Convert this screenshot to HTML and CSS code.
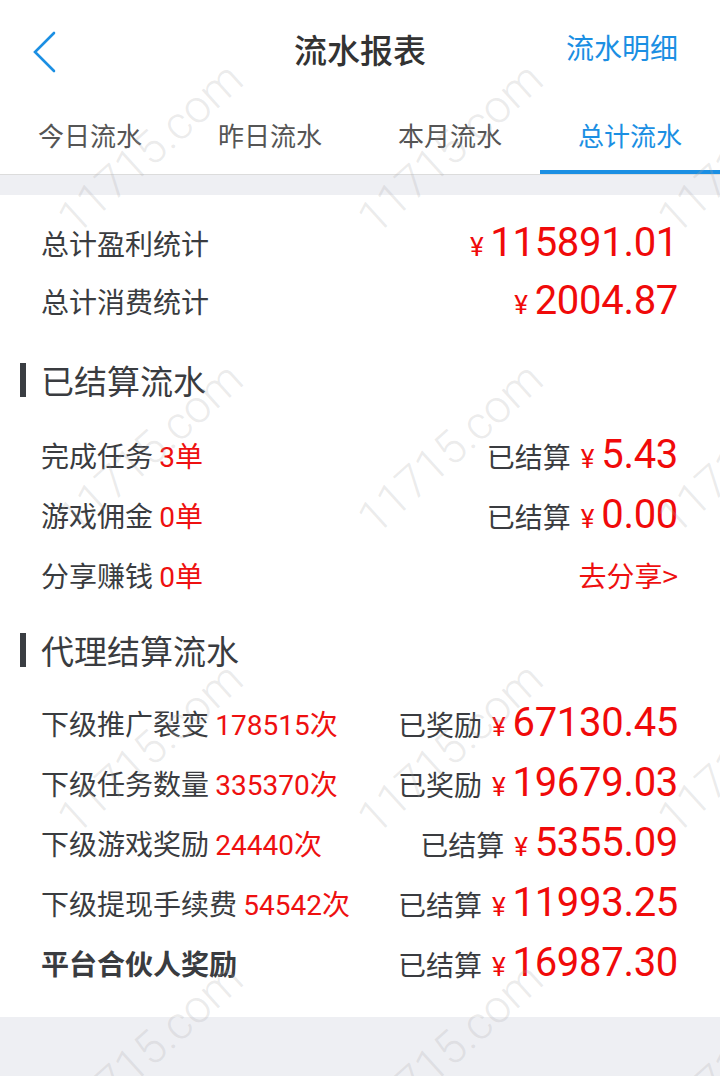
FILE: index.html
```html
<!DOCTYPE html>
<html lang="zh-CN">
<head>
<meta charset="utf-8">
<title>流水报表</title>
<link rel="stylesheet" href="styles.css">
</head>
<body>
<div class="page">
  <header class="topbar">
    <span class="back">
      <svg width="26" height="44" viewBox="0 0 26 44"><path d="M22 3 L3 22 L22 41" fill="none" stroke="#1b8fe3" stroke-width="2.6" stroke-linecap="round" stroke-linejoin="miter"/></svg>
    </span>
    <h1 class="title">流水报表</h1>
    <span class="detail">流水明细</span>
  </header>
  <nav class="tabs">
    <span class="tab">今日流水</span>
    <span class="tab">昨日流水</span>
    <span class="tab">本月流水</span>
    <span class="tab active">总计流水</span>
  </nav>
  <main class="content">
    <div class="row sum">
      <span class="label">总计盈利统计</span>
      <span class="money"><i class="yen">¥</i>115891.01</span>
    </div>
    <div class="row sum">
      <span class="label">总计消费统计</span>
      <span class="money"><i class="yen">¥</i>2004.87</span>
    </div>

    <h2 class="sec first">已结算流水</h2>
    <div class="row">
      <span class="label">完成任务 <em class="cnt">3单</em></span>
      <span class="right">已结算<span class="money"><i class="yen">¥</i>5.43</span></span>
    </div>
    <div class="row">
      <span class="label">游戏佣金 <em class="cnt">0单</em></span>
      <span class="right">已结算<span class="money"><i class="yen">¥</i>0.00</span></span>
    </div>
    <div class="row">
      <span class="label">分享赚钱 <em class="cnt">0单</em></span>
      <span class="share">去分享&gt;</span>
    </div>

    <h2 class="sec second">代理结算流水</h2>
    <div class="row">
      <span class="label">下级推广裂变 <em class="cnt">178515次</em></span>
      <span class="right">已奖励<span class="money"><i class="yen">¥</i>67130.45</span></span>
    </div>
    <div class="row">
      <span class="label">下级任务数量 <em class="cnt">335370次</em></span>
      <span class="right">已奖励<span class="money"><i class="yen">¥</i>19679.03</span></span>
    </div>
    <div class="row">
      <span class="label">下级游戏奖励 <em class="cnt">24440次</em></span>
      <span class="right">已结算<span class="money"><i class="yen">¥</i>5355.09</span></span>
    </div>
    <div class="row">
      <span class="label">下级提现手续费 <em class="cnt">54542次</em></span>
      <span class="right">已结算<span class="money"><i class="yen">¥</i>11993.25</span></span>
    </div>
    <div class="row">
      <span class="label bold">平台合伙人奖励</span>
      <span class="right">已结算<span class="money"><i class="yen">¥</i>16987.30</span></span>
    </div>
  </main>
</div>
<div class="watermark-clip" aria-hidden="true">
  <div class="watermark">
    <span>11715.com</span><span>11715.com</span><span>11715.com</span>
    <span>11715.com</span><span>11715.com</span><span>11715.com</span>
    <span>11715.com</span><span>11715.com</span><span>11715.com</span>
    <span>11715.com</span><span>11715.com</span><span>11715.com</span>
  </div>
</div>
</body>
</html>
```

FILE: styles.css
```css
* { box-sizing: border-box; margin: 0; padding: 0; }
html, body {
  width: 720px;
  height: 1076px;
  background: #eeeff3;
  overflow: hidden;
}
body {
  font-family: "Noto Sans CJK SC", "Noto Sans", sans-serif;
  color: #3a3c40;
  position: relative;
}
.page { width: 720px; }

.topbar {
  height: 96px;
  background: #fff;
  display: flex;
  align-items: center;
  justify-content: center;
  position: relative;
}
.back {
  position: absolute;
  left: 32px;
  top: 30px;
  display: flex;
}
.title {
  font-size: 33px;
  font-weight: 500;
  color: #333;
  line-height: 1;
  margin-top: 2px;
}
.detail {
  position: absolute;
  right: 42px;
  top: 30px;
  font-size: 28px;
  line-height: 34px;
  color: #1b8fe3;
}

.tabs {
  height: 79px;
  background: #fff;
  display: grid;
  grid-template-columns: repeat(4, 1fr);
  border-bottom: 1px solid #dcdcdc;
}
.tab {
  display: flex;
  align-items: center;
  justify-content: center;
  font-size: 26px;
  color: #555;
  padding-top: 2px;
  border-bottom: 4px solid transparent;
}
.tab.active {
  color: #1b8fe3;
  border-bottom-color: #1b8fe3;
}

.content {
  margin-top: 20px;
  background: #fff;
  padding: 19px 42px 24px 41px;
}
.row {
  height: 60px;
  display: flex;
  align-items: center;
  justify-content: space-between;
}
.row.sum { height: 58px; }
.label {
  font-size: 28px;
  color: #3a3c40;
  white-space: nowrap;
}
.label.bold { font-weight: 700; }
.cnt {
  font-style: normal;
  color: #ee1010;
  font-family: Roboto, "Noto Sans CJK SC", sans-serif;
}
.right {
  font-size: 28px;
  color: #3a3c40;
  display: flex;
  align-items: baseline;
  white-space: nowrap;
}
.money {
  font-family: Roboto, "Noto Sans", sans-serif;
  font-size: 40px;
  color: #f00a0a;
  line-height: 1;
  display: inline-flex;
  align-items: baseline;
  letter-spacing: -0.3px;
}
.yen {
  font-style: normal;
  font-size: 26px;
  margin: 0 7px 0 10px;
}
.share {
  font-size: 28px;
  color: #ee1010;
}

.sec {
  height: 60px;
  display: flex;
  align-items: center;
  font-size: 33px;
  font-weight: 400;
  color: #3a3c40;
  margin-left: -21px;
  position: relative;
  padding-left: 21px;
}
.sec::before {
  content: "";
  position: absolute;
  left: 0;
  top: 13px;
  width: 6px;
  height: 34px;
  background: #3a3d42;
}
.sec.first { margin-top: 20px; margin-bottom: 15px; }
.sec.second { margin-top: 15px; margin-bottom: 13px; }

.watermark-clip {
  position: absolute;
  left: 0;
  top: 0;
  width: 720px;
  height: 1076px;
  overflow: hidden;
  pointer-events: none;
}
.watermark {
  margin-top: -2px;
  display: grid;
  grid-template-columns: repeat(3, 300px);
  grid-auto-rows: 300px;
}
.watermark span {
  display: flex;
  align-items: center;
  justify-content: center;
  font-family: Roboto, sans-serif;
  font-weight: 300;
  font-size: 46px;
  color: rgba(170, 170, 170, 0.24);
  transform: rotate(-42deg);
  white-space: nowrap;
}
```
